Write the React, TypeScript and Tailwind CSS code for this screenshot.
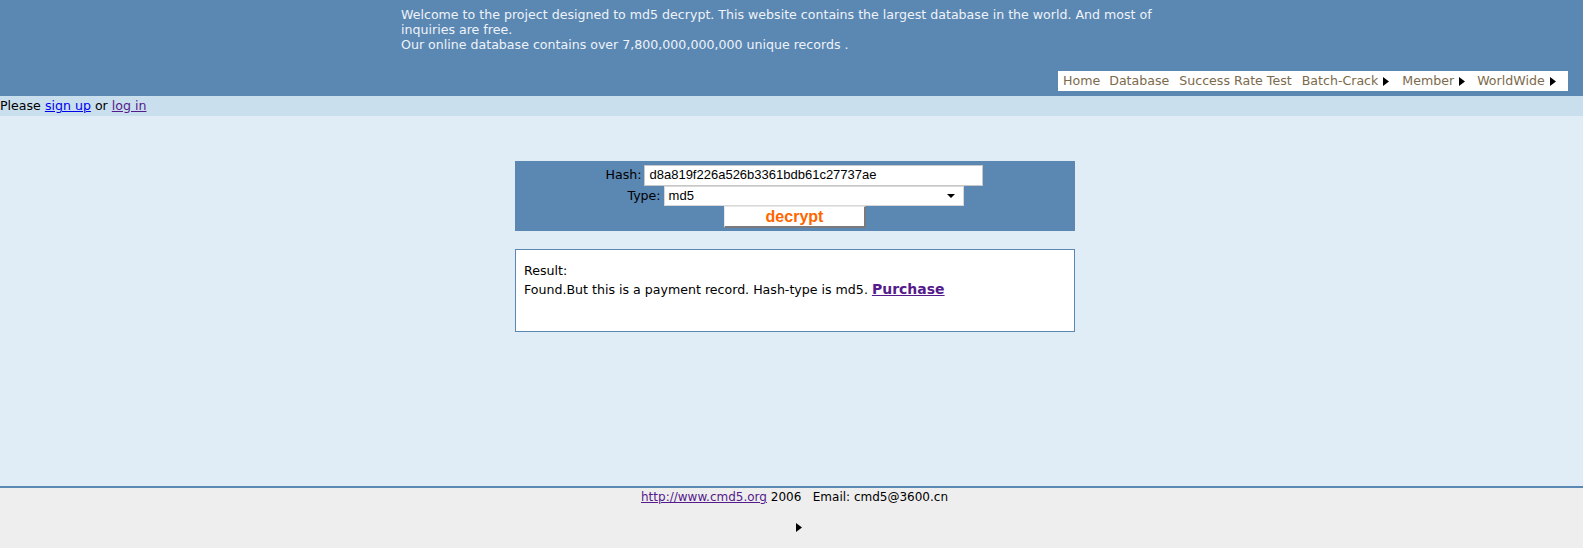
import React from "react";

const Tri = () => (
  <svg width="6" height="9" viewBox="0 0 6 9" className="inline-block ml-[5px]">
    <path d="M0 0 L6 4.5 L0 9 Z" fill="#000" />
  </svg>
);

export default function App() {
  const font = { fontFamily: '"DejaVu Sans", Verdana, sans-serif' };
  const arial = { fontFamily: '"Liberation Sans", Arial, sans-serif' };
  return (
    <div className="w-[1583px] h-[548px] flex flex-col text-[12.6px] text-black" style={font}>
      <div className="h-[96px] bg-[#5b87b3] flex flex-col">
        <div className="pl-[401px] pt-[7px] leading-[15px] text-[#eef3f8] whitespace-nowrap">
          Welcome to the project designed to md5 decrypt. This website contains the largest database in the world. And most of
          <br />
          inquiries are free.
          <br />
          Our online database contains over 7,800,000,000,000 unique records .
        </div>
        <div className="flex justify-end pr-[15px] mt-[19px]">
          <div className="h-[20px] w-[510px] bg-white flex items-center pl-[5px] pt-[1px] text-[#7b6a4c] leading-none">
            <span>Home</span>
            <span className="ml-[9px]">Database</span>
            <span className="ml-[10px]">Success Rate Test</span>
            <span className="ml-[10px] flex items-center">Batch-Crack<Tri /></span>
            <span className="ml-[13px] flex items-center">Member<Tri /></span>
            <span className="ml-[12px] flex items-center">WorldWide<Tri /></span>
          </div>
        </div>
      </div>
      <div className="h-[20px] bg-[#c9dfee] leading-[20px] pl-0">
        Please <a href="#" className="text-[#0000ee] underline">sign up</a> or{" "}
        <a href="#" className="text-[#551a8b] underline">log in</a>
      </div>
      <div className="flex-1 bg-[#e1edf6] flex flex-col items-center pt-[45px]">
        <div className="w-[560px] h-[70px] bg-[#5b87b3] flex flex-col items-center pt-[3px] ml-[7px]">
          <div className="flex items-center h-[22px] ml-[-1px]">
            <span className="mr-[3px]">Hash:</span>
            <div
              className="w-[339px] h-[21px] bg-white border border-[#c8c8c8] flex items-center pl-[4px] text-[13px]"
              style={arial}
            >
              d8a819f226a526b3361bdb61c27737ae
            </div>
          </div>
          <div className="flex items-center h-[20px] ml-[1px]">
            <span className="mr-[3px]">Type:</span>
            <div
              className="w-[300px] h-[20px] bg-white border border-[#d8d8d8] flex items-center justify-between pl-[4px] pr-[8px] text-[13px]"
              style={arial}
            >
              <span>md5</span>
              <svg width="8" height="4" viewBox="0 0 8 4"><path d="M0 0 L8 0 L4 4 Z" fill="#000" /></svg>
            </div>
          </div>
          <div
            className="w-[142px] h-[22px] bg-white border-t border-l border-[#e8e8e8] border-r-2 border-b-2 border-r-[#7a7a7a] border-b-[#7a7a7a] flex items-center justify-center font-bold text-[#ff6600] text-[16px]"
            style={arial}
          >
            decrypt
          </div>
        </div>
        <div className="w-[560px] h-[83px] bg-white border border-[#5b87b3] mt-[18px] ml-[7px] pl-[8px] pt-[11px] leading-[19px]">
          <div>Result:</div>
          <div>
            Found.But this is a payment record. Hash-type is md5.{" "}
            <a href="#" className="font-bold text-[14px] text-[#551a8b] underline">Purchase</a>
          </div>
        </div>
      </div>
      <div className="h-[62px] bg-[#eeeeee] border-t-[2px] border-[#5b87b3] flex flex-col items-center">
        <div className="leading-[16px] mt-[1px] whitespace-pre text-[12px] ml-[6px]">
          <a href="#" className="text-[#551a8b] underline">http://www.cmd5.org</a> 2006   Email: cmd5@3600.cn
        </div>
        <div className="mt-[18px] ml-[14px]">
          <svg width="6" height="9" viewBox="0 0 6 9"><path d="M0 0 L6 4.5 L0 9 Z" fill="#000" /></svg>
        </div>
      </div>
    </div>
  );
}
